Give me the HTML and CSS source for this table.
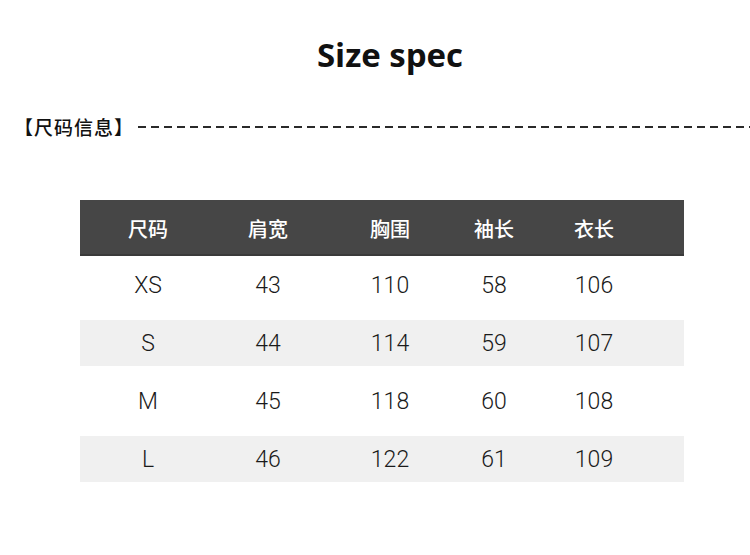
FILE: index.html
```html
<!DOCTYPE html>
<html lang="zh-CN">
<head>
<meta charset="utf-8">
<title>Size spec</title>
<link rel="stylesheet" href="styles.css">
</head>
<body>
<main class="page">
  <h1 class="title">Size spec</h1>
  <div class="section">
    <span class="section-label">【尺码信息】</span>
    <span class="dashes"></span>
  </div>
  <div class="table">
    <div class="row head">
      <span>尺码</span><span>肩宽</span><span>胸围</span><span>袖长</span><span>衣长</span>
    </div>
    <div class="row">
      <span>XS</span><span>43</span><span>110</span><span>58</span><span>106</span>
    </div>
    <div class="row shaded">
      <span>S</span><span>44</span><span>114</span><span>59</span><span>107</span>
    </div>
    <div class="row">
      <span>M</span><span>45</span><span>118</span><span>60</span><span>108</span>
    </div>
    <div class="row shaded">
      <span>L</span><span>46</span><span>122</span><span>61</span><span>109</span>
    </div>
  </div>
</main>
</body>
</html>
```

FILE: styles.css
```css
html, body {
  margin: 0;
  padding: 0;
  background: #ffffff;
}

.page {
  width: 750px;
  height: 555px;
  overflow: hidden;
  font-family: "Noto Sans CJK SC", "Noto Sans", sans-serif;
  color: #1e1e1e;
}

.title {
  margin: 0;
  padding-top: 35px;
  height: 40px;
  line-height: 40px;
  text-align: center;
  font-family: "Open Sans", "Noto Sans", sans-serif;
  font-weight: 700;
  font-size: 33px;
  color: #111;
  padding-left: 30px;
}

.section {
  display: flex;
  align-items: center;
  margin-top: 41px;
  height: 22px;
  padding-left: 14px;
}

.section-label {
  font-size: 19px;
  line-height: 22px;
  font-weight: 500;
  color: #111;
  letter-spacing: 1px;
}

.dashes {
  flex: 1;
  margin-left: 4px;
  height: 2px;
  background: repeating-linear-gradient(to right, #2a2a2a 0 8px, transparent 8px 13px);
}

.table {
  margin-top: 62px;
  margin-left: 80px;
  width: 604px;
}

.row {
  display: grid;
  grid-template-columns: 136px 104px 140px 68px 132px 1fr;
  align-items: center;
  height: 58px;
  font-family: Roboto, "Noto Sans", sans-serif;
  font-size: 23px;
  font-weight: 300;
  color: #1a1a1a;
  text-align: center;
  box-sizing: border-box;
}

.row.head {
  height: 56px;
  background: #464646;
  color: #fff;
  font-family: "Noto Sans CJK SC", sans-serif;
  font-weight: 500;
  font-size: 20px;
  border-bottom: 2px solid #3a3a3a;
  padding-top: 3px;
}

.row.shaded {
  background: linear-gradient(to bottom, transparent 6px, #f0f0f0 6px, #f0f0f0 52px, transparent 52px);
}
```
